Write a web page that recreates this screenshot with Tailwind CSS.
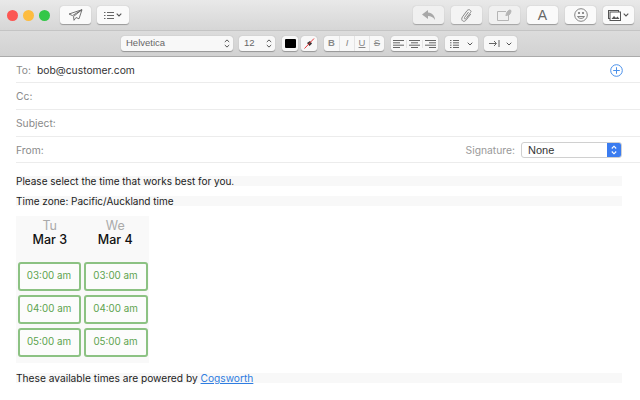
<!DOCTYPE html>
<html>
<head>
<meta charset="utf-8">
<script src="https://cdn.jsdelivr.net/npm/@tailwindcss/browser@4"></script>
</head>
<body class="bg-white overflow-hidden">
<div class="w-[640px] h-[400px] flex flex-col font-['Inter',sans-serif] bg-white overflow-hidden">
  <!-- top toolbar -->
  <div class="h-[31px] shrink-0 flex items-center pl-[7px] pr-[6px] bg-gradient-to-b from-[#e9e9e9] to-[#d6d6d6] border-b border-[#c4c4c4]">
    <div class="flex gap-[5px]">
      <span class="w-[11px] h-[11px] rounded-full bg-[#fc5753]"></span>
      <span class="w-[11px] h-[11px] rounded-full bg-[#fdbc40]"></span>
      <span class="w-[11px] h-[11px] rounded-full bg-[#33c748]"></span>
    </div>
    <div class="ml-[10px] w-[31px] h-[18px] rounded-[3px] bg-[#fafafa] shadow-[0_0.5px_1px_rgba(0,0,0,0.3)] flex items-center justify-center">
      <svg width="15" height="12" viewBox="0 0 15 12" fill="none" stroke="#666" stroke-width="0.9" stroke-linejoin="round"><path d="M14 .7 1 5l3.500 1.600L14 .7ZM14 .7 5.500 7.500 6 11.300l2-2.800 3 1.300L14 .7Z"/></svg>
    </div>
    <div class="ml-[6px] w-[32px] h-[18px] rounded-[3px] bg-[#fafafa] shadow-[0_0.5px_1px_rgba(0,0,0,0.3)] flex items-center justify-center gap-[2px]">
      <svg width="10" height="7" viewBox="0 0 10 7" stroke="#666" stroke-width="1"><path d="M0 .5h1.500M3 .5h7M0 3.500h1.500M3 3.500h7M0 6.500h1.500M3 6.500h7"/></svg>
      <svg width="6" height="4" viewBox="0 0 6 4" fill="none" stroke="#555" stroke-width="1.100"><path d="M.7.7 3 3l2.300-2.300"/></svg>
    </div>
    <div class="ml-auto flex gap-[7px]">
      <div class="w-[31px] h-[18px] rounded-[3px] bg-[#f0f0f0] shadow-[0_0.5px_1px_rgba(0,0,0,0.25)] flex items-center justify-center">
        <svg width="13" height="11" viewBox="0 0 13 11" fill="#a8a8a8"><path d="M6 0 0 4.500 6 9V6c3 0 5 1 7 4 0-4-2.500-7-7-7.500V0Z"/></svg>
      </div>
      <div class="w-[31px] h-[18px] rounded-[3px] bg-[#f4f4f4] shadow-[0_0.5px_1px_rgba(0,0,0,0.25)] flex items-center justify-center">
        <svg width="11" height="13" viewBox="0 0 11 13" fill="none" stroke="#888" stroke-width="1"><path d="M9.500 1.500c-1-1.200-2.500-1-3.500.2L1.500 7.800c-1.300 1.800-.8 3.500.3 4.200s2.500.2 3.500-1.200L9.800 5"/><path d="M7.500 3 3.500 8.500c-.8 1.200.8 2 1.600 1L9.500 3.500c.8-1 .7-1.500 0-2"/></svg>
      </div>
      <div class="w-[31px] h-[18px] rounded-[3px] bg-[#f0f0f0] shadow-[0_0.5px_1px_rgba(0,0,0,0.25)] flex items-center justify-center">
        <svg width="15" height="12" viewBox="0 0 15 12" fill="none" stroke="#b5b5b5" stroke-width="1"><path d="M9 2.500H.5v9h11V6"/><path d="M9 7c0-3 2-6 4-6s.5 4-1.500 5.500" fill="#b5b5b5"/></svg>
      </div>
      <div class="w-[31px] h-[18px] rounded-[3px] bg-[#fafafa] shadow-[0_0.5px_1px_rgba(0,0,0,0.3)] flex items-center justify-center text-[14px] text-[#666] font-['Liberation_Sans',sans-serif]">A</div>
      <div class="w-[31px] h-[18px] rounded-[3px] bg-[#fafafa] shadow-[0_0.5px_1px_rgba(0,0,0,0.3)] flex items-center justify-center">
        <svg width="14" height="14" viewBox="0 0 14 14" fill="none" stroke="#777" stroke-width="0.9"><circle cx="7" cy="7" r="6.300"/><path d="M3.500 8.500c1 2.500 6 2.500 7 0Z"/><circle cx="5" cy="5" r=".7" fill="#777"/><circle cx="9" cy="5" r=".7" fill="#777"/></svg>
      </div>
      <div class="w-[31px] h-[18px] rounded-[3px] bg-[#fafafa] shadow-[0_0.5px_1px_rgba(0,0,0,0.3)] flex items-center justify-center gap-[2px]">
        <svg width="13" height="11" viewBox="0 0 13 11"><rect x=".5" y=".5" width="10" height="8" fill="none" stroke="#555"/><rect x="2" y="2" width="10.500" height="8.500" fill="#fff" stroke="#555"/><path d="M3.500 9 6 6l2 2 1.500-1.500L11.500 9Z" fill="#555"/></svg>
        <svg width="6" height="4" viewBox="0 0 6 4" fill="none" stroke="#555" stroke-width="1.100"><path d="M.7.7 3 3l2.300-2.300"/></svg>
      </div>
    </div>
  </div>
  <!-- format bar -->
  <div class="h-[26px] shrink-0 flex items-center pl-[121px] bg-gradient-to-b from-[#dcdcdc] to-[#d2d2d2] border-b border-[#ababab] text-[9.5px] text-[#666] font-['Liberation_Sans',sans-serif]">
    <div class="w-[112px] h-[15px] rounded-[3px] bg-[#f8f8f8] shadow-[0_0.5px_1px_rgba(0,0,0,0.3)] flex items-center justify-between pl-[5px] pr-[3px]">
      <span>Helvetica</span>
      <svg width="6" height="9" viewBox="0 0 6 9" fill="none" stroke="#555" stroke-width="1"><path d="M.8 3 3 .9 5.200 3M.8 6 3 8.100 5.200 6"/></svg>
    </div>
    <div class="ml-[6px] w-[36px] h-[15px] rounded-[3px] bg-[#f8f8f8] shadow-[0_0.5px_1px_rgba(0,0,0,0.3)] flex items-center justify-between pl-[5px] pr-[3px]">
      <span>12</span>
      <svg width="6" height="9" viewBox="0 0 6 9" fill="none" stroke="#555" stroke-width="1"><path d="M.8 3 3 .9 5.200 3M.8 6 3 8.100 5.200 6"/></svg>
    </div>
    <div class="ml-[7px] w-[16px] h-[15px] rounded-[3px] bg-[#f8f8f8] shadow-[0_0.5px_1px_rgba(0,0,0,0.3)] flex items-center justify-center">
      <span class="w-[11px] h-[9px] bg-black rounded-[1px]"></span>
    </div>
    <div class="ml-[3px] w-[16px] h-[15px] rounded-[3px] bg-[#f8f8f8] shadow-[0_0.5px_1px_rgba(0,0,0,0.3)] flex items-center justify-center">
      <svg width="11" height="11" viewBox="0 0 11 11"><path d="M3 5 6 3l2 2.500-2.500 2.500Z" fill="#333"/><path d="M.5 10.500 10 .5" stroke="#e8383b" stroke-width="1"/></svg>
    </div>
    <div class="ml-[7px] w-[60px] h-[15px] rounded-[3px] bg-[#f8f8f8] shadow-[0_0.5px_1px_rgba(0,0,0,0.3)] flex items-center text-[9.5px] text-[#888]">
      <span class="w-[15px] text-center font-bold">B</span>
      <span class="w-[15px] text-center italic border-l border-[#e4e4e4]">I</span>
      <span class="w-[15px] text-center underline border-l border-[#e4e4e4]">U</span>
      <span class="w-[15px] text-center line-through border-l border-[#e4e4e4]">S</span>
    </div>
    <div class="ml-[7px] w-[47px] h-[15px] rounded-[3px] bg-[#f8f8f8] shadow-[0_0.5px_1px_rgba(0,0,0,0.3)] flex items-center">
      <span class="w-[15px] flex justify-center"><svg width="11" height="8" viewBox="0 0 11 8" stroke="#666" stroke-width="1"><path d="M0 .5h11M0 2.800h7M0 5.200h11M0 7.500h7"/></svg></span>
      <span class="w-[16px] flex justify-center border-l border-[#e4e4e4]"><svg width="11" height="8" viewBox="0 0 11 8" stroke="#666" stroke-width="1"><path d="M0 .5h11M2 2.800h7M0 5.200h11M2 7.500h7"/></svg></span>
      <span class="w-[16px] flex justify-center border-l border-[#e4e4e4]"><svg width="11" height="8" viewBox="0 0 11 8" stroke="#666" stroke-width="1"><path d="M0 .5h11M4 2.800h7M0 5.200h11M4 7.500h7"/></svg></span>
    </div>
    <div class="ml-[7px] w-[33px] h-[15px] rounded-[3px] bg-[#f8f8f8] shadow-[0_0.5px_1px_rgba(0,0,0,0.3)] flex items-center justify-between pl-[5px] pr-[5px]">
      <svg width="9" height="8" viewBox="0 0 9 8" stroke="#666" stroke-width="1"><path d="M0 .5h1.500M3 .5h6M0 2.800h1.500M3 2.800h6M0 5.200h1.500M3 5.200h6M0 7.500h1.500M3 7.500h6"/></svg>
      <svg width="6" height="4" viewBox="0 0 6 4" fill="none" stroke="#555" stroke-width="1"><path d="M.7.7 3 3l2.300-2.300"/></svg>
    </div>
    <div class="ml-[6px] w-[33px] h-[15px] rounded-[3px] bg-[#f8f8f8] shadow-[0_0.5px_1px_rgba(0,0,0,0.3)] flex items-center justify-between pl-[5px] pr-[5px]">
      <svg width="11" height="7" viewBox="0 0 11 7" fill="none" stroke="#666" stroke-width="1"><path d="M0 3.500h7M5 1l2.500 2.500L5 6M10 0v7"/></svg>
      <svg width="6" height="4" viewBox="0 0 6 4" fill="none" stroke="#555" stroke-width="1"><path d="M.7.7 3 3l2.300-2.300"/></svg>
    </div>
  </div>
  <!-- header rows -->
  <div class="pl-[16px] text-[10.3px]">
    <div class="h-[26px] flex items-center border-b border-[#ececec] pt-[1px]">
      <span class="text-[#8a8a8a] w-[21px] mt-[2px]">To:</span>
      <span class="text-[#333] mt-[2px]">bob@customer.com</span>
      <svg class="ml-auto mr-[17px]" width="13" height="13" viewBox="0 0 13 13" fill="none" stroke="#4a90ea" stroke-width="1"><circle cx="6.500" cy="6.500" r="5.800"/><path d="M6.500 3.200v6.600M3.200 6.500h6.600"/></svg>
    </div>
    <div class="h-[27px] flex items-center border-b border-[#ececec]"><span class="text-[#8a8a8a] mt-[2px]">Cc:</span></div>
    <div class="h-[27px] flex items-center border-b border-[#ececec]"><span class="text-[#8a8a8a] mt-[2px]">Subject:</span></div>
    <div class="h-[26px] flex items-center border-b border-[#ececec] pt-[1px]">
      <span class="text-[#8a8a8a] mt-[2px]">From:</span>
      <span class="ml-auto text-[#999] mt-[2px]">Signature:</span>
      <div class="ml-[6px] mr-[18px] w-[101px] h-[16px] rounded-[3px] bg-white border border-[#d0d0d0] flex items-center justify-between pl-[6px] text-[#333] text-[11px] font-['Liberation_Sans',sans-serif] overflow-hidden">
        <span>None</span>
        <span class="w-[14px] h-[16px] bg-[#3b7cf0] flex items-center justify-center">
          <svg width="6" height="10" viewBox="0 0 6 10" fill="none" stroke="#fff" stroke-width="1.100"><path d="M.8 3.500 3 1.200l2.200 2.300M.8 6.500 3 8.800l2.200-2.300"/></svg>
        </span>
      </div>
    </div>
  </div>
  <!-- body -->
  <div class="px-[16px] pt-[13px] text-[10px] text-[#222]">
    <div class="h-[10px] leading-[10px] bg-[#f8f8f8] w-[606px]">Please select the time that works best for you.</div>
    <div class="mt-[10px] h-[10px] leading-[10px] bg-[#f8f8f8] w-[606px]">Time zone: Pacific/Auckland time</div>
    <div class="mt-[10px] w-[133px] h-[147px] bg-[#f9f9f9] flex flex-col items-center">
      <div class="grid grid-cols-2 gap-x-[2px] pt-[3px] px-[2px] w-full">
        <div class="text-center leading-[14px]">
          <div class="text-[12.500px] text-[#aaa]">Tu</div>
          <div class="text-[12.500px] font-medium text-[#111]">Mar 3</div>
        </div>
        <div class="text-center leading-[14px]">
          <div class="text-[12.500px] text-[#aaa]">We</div>
          <div class="text-[12.500px] font-medium text-[#111]">Mar 4</div>
        </div>
      </div>
      <div class="grid grid-cols-2 gap-x-[2px] gap-y-[4px] mt-[15px]">
        <a class="w-[63px] h-[29px] rounded-[3px] border-2 border-[#8cc283] bg-[#fcfcfc] text-[#5da34e] flex items-center justify-center text-[9.800px]">03:00 am</a>
        <a class="w-[64px] h-[29px] rounded-[3px] border-2 border-[#8cc283] bg-[#fcfcfc] text-[#5da34e] flex items-center justify-center text-[9.800px]">03:00 am</a>
        <a class="w-[63px] h-[29px] rounded-[3px] border-2 border-[#8cc283] bg-[#fcfcfc] text-[#5da34e] flex items-center justify-center text-[9.800px]">04:00 am</a>
        <a class="w-[64px] h-[29px] rounded-[3px] border-2 border-[#8cc283] bg-[#fcfcfc] text-[#5da34e] flex items-center justify-center text-[9.800px]">04:00 am</a>
        <a class="w-[63px] h-[29px] rounded-[3px] border-2 border-[#8cc283] bg-[#fcfcfc] text-[#5da34e] flex items-center justify-center text-[9.800px]">05:00 am</a>
        <a class="w-[64px] h-[29px] rounded-[3px] border-2 border-[#8cc283] bg-[#fcfcfc] text-[#5da34e] flex items-center justify-center text-[9.800px]">05:00 am</a>
      </div>
    </div>
    <div class="mt-[10px] h-[10px] leading-[10px] bg-[#f8f8f8] w-[606px] text-[10.200px]">These available times are powered by <a class="text-[#2f7de1] underline">Cogsworth</a></div>
  </div>
</div>
</body>
</html>
